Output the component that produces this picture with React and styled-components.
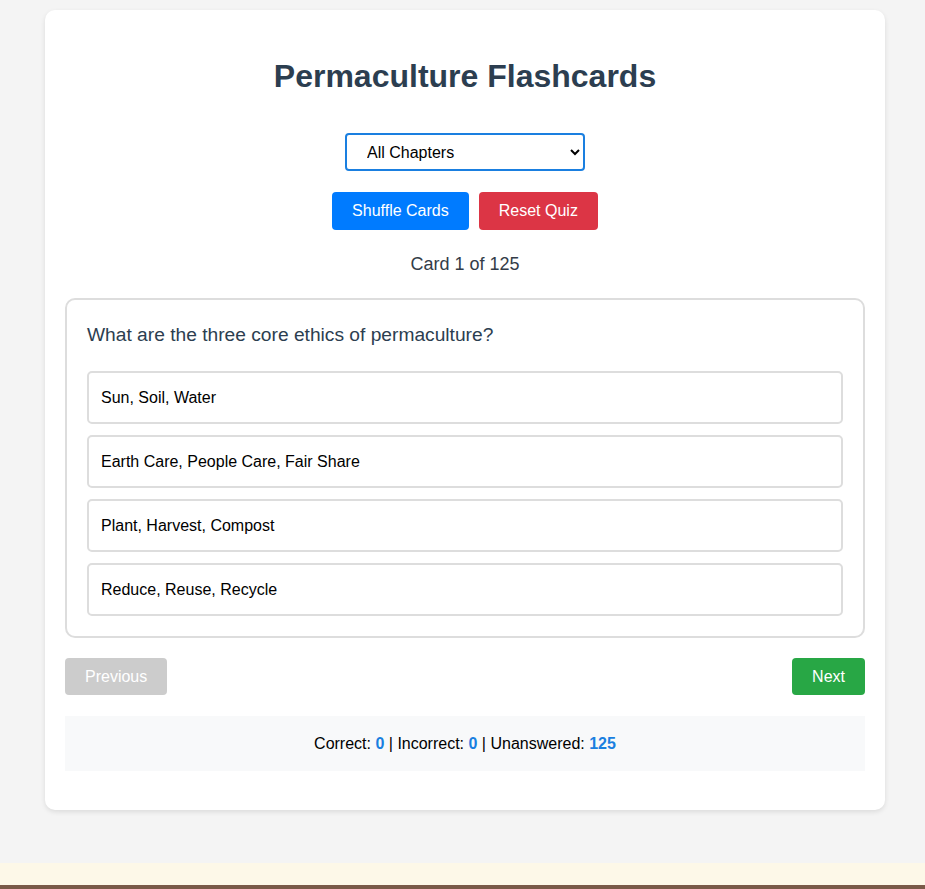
import React, { useState } from "react";
import styled, { createGlobalStyle } from "styled-components";

const GlobalStyle = createGlobalStyle`
  html, body {
    margin: 0;
    padding: 0;
    background: #f4f4f4;
    font-family: "Liberation Sans", Arial, sans-serif;
  }
`;

const options = [
  "Sun, Soil, Water",
  "Earth Care, People Care, Fair Share",
  "Plant, Harvest, Compost",
  "Reduce, Reuse, Recycle",
];

const App = () => {
  const [chapter, setChapter] = useState("all");

  return (
    <>
      <GlobalStyle />
      <Page>
        <Container>
          <Title>Permaculture Flashcards</Title>
          <Select value={chapter} onChange={(e) => setChapter(e.target.value)}>
            <option value="all">All Chapters</option>
          </Select>
          <BtnRow>
            <Btn color="#007bff">Shuffle Cards</Btn>
            <Btn color="#dc3545">Reset Quiz</Btn>
          </BtnRow>
          <Counter>Card 1 of 125</Counter>
          <Card>
            <Question>What are the three core ethics of permaculture?</Question>
            <OptionList>
              {options.map((o) => (
                <Option key={o}>{o}</Option>
              ))}
            </OptionList>
          </Card>
          <Nav>
            <NavBtn color="#cccccc" disabled>
              Previous
            </NavBtn>
            <NavBtn color="#28a745">Next</NavBtn>
          </Nav>
          <Stats>
            Correct: <Num>0</Num> | Incorrect: <Num>0</Num> | Unanswered:{" "}
            <Num>125</Num>
          </Stats>
        </Container>
      </Page>
      <Footer>
        <FooterBand />
        <FooterLine />
      </Footer>
    </>
  );
};

const Page = styled.div`
  padding: 10px 40px 53px 45px;
`;

const Container = styled.div`
  width: 800px;
  background: #fff;
  padding: 20px 20px 39px;
  border-radius: 10px;
  box-shadow: 0 2px 5px rgba(0, 0, 0, 0.1);
  display: flex;
  flex-direction: column;
  align-items: center;
`;

const Title = styled.h1`
  font-size: 32px;
  font-weight: bold;
  color: #2c3e50;
  margin: 28px 0 38px;
  line-height: 37px;
`;

const Select = styled.select`
  width: 240px;
  height: 38px;
  padding: 0 16px;
  font-size: 16px;
  font-family: "Liberation Sans", Arial, sans-serif;
  color: #000;
  background: #fff;
  border: 2px solid #1a7fe0;
  border-radius: 4px;
`;

const BtnRow = styled.div`
  display: flex;
  gap: 10px;
  margin-top: 21px;
`;

const Btn = styled.button`
  background: ${(p) => p.color};
  color: #fff;
  border: none;
  border-radius: 4px;
  padding: 0 20px;
  height: 38px;
  font-size: 16px;
  font-family: "Liberation Sans", Arial, sans-serif;
  cursor: pointer;
`;

const Counter = styled.div`
  margin-top: 24px;
  font-size: 18px;
  color: #333c48;
  line-height: 21px;
`;

const Card = styled.div`
  align-self: stretch;
  margin-top: 23px;
  border: 2px solid #dddddd;
  border-radius: 10px;
  padding: 20px;
`;

const Question = styled.div`
  font-size: 19.2px;
  color: #2c3e50;
  line-height: 28px;
  margin-top: 1px;
  margin-bottom: 22px;
`;

const OptionList = styled.div`
  display: flex;
  flex-direction: column;
  gap: 11px;
`;

const Option = styled.div`
  border: 2px solid #dddddd;
  border-radius: 5px;
  padding: 0 12px;
  height: 49px;
  display: flex;
  align-items: center;
  font-size: 16px;
  color: #000;
  background: #fff;
  cursor: pointer;
`;

const Nav = styled.div`
  align-self: stretch;
  display: flex;
  justify-content: space-between;
  margin-top: 20px;
`;

const NavBtn = styled.button`
  background: ${(p) => p.color};
  color: #fff;
  border: none;
  border-radius: 4px;
  padding: 0 20px;
  height: 37px;
  font-size: 16px;
  font-family: "Liberation Sans", Arial, sans-serif;
  cursor: ${(p) => (p.disabled ? "default" : "pointer")};
`;

const Stats = styled.div`
  align-self: stretch;
  margin-top: 21px;
  background: #f8f9fa;
  height: 55px;
  line-height: 55px;
  text-align: center;
  font-size: 16px;
  color: #000;
`;

const Num = styled.b`
  color: #1a7fe0;
`;

const Footer = styled.div`
  display: flex;
  flex-direction: column;
`;

const FooterBand = styled.div`
  height: 22px;
  background: #fdf8e8;
`;

const FooterLine = styled.div`
  height: 4px;
  background: #7a5a48;
`;

export default App;
